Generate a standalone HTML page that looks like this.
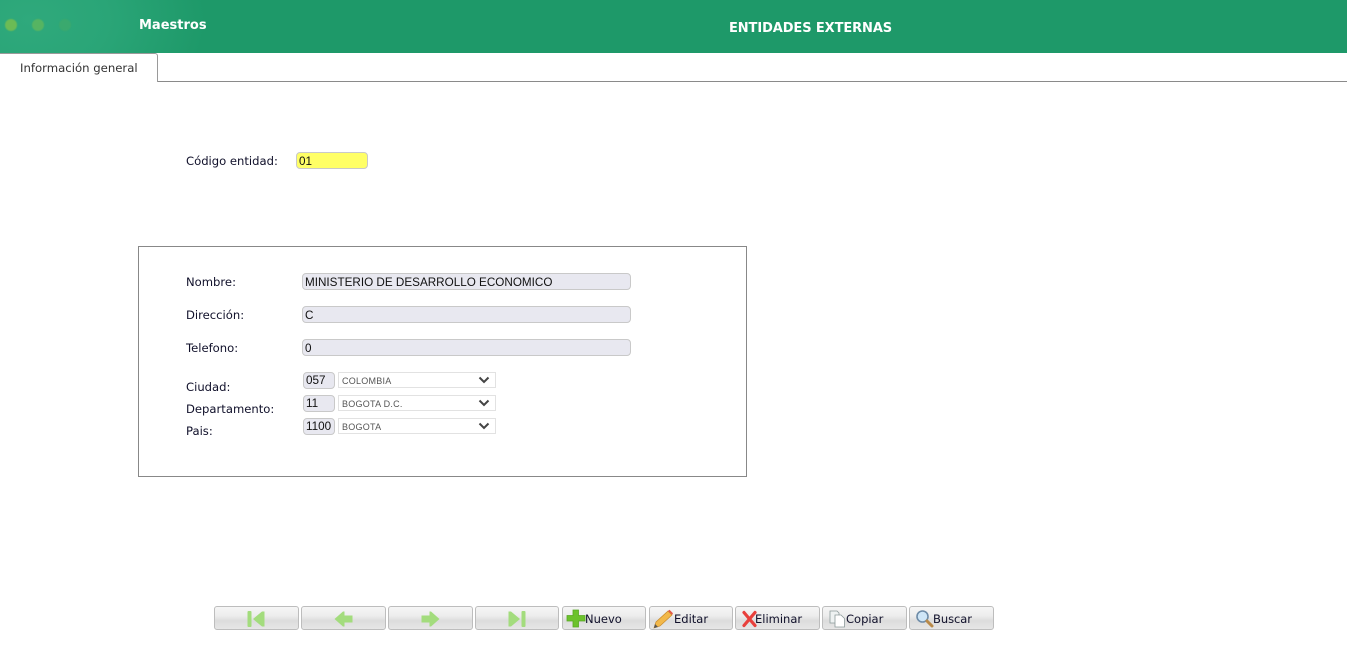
<!DOCTYPE html>
<html lang="es"><head><meta charset="utf-8"><title>Entidades externas</title>
<style>
html,body{margin:0;padding:0;background:#fff;width:1347px;height:659px;overflow:hidden;font-family:"DejaVu Sans","Liberation Sans",sans-serif;color:#1a1a2a}
.a{position:absolute;white-space:nowrap}
#hd{left:0;top:0;width:1347px;height:53px;background:radial-gradient(ellipse 175px 120px at 30px 20px,#2fa97c 0%,#2aa577 45%,#1e9969 100%)}
.dot{position:absolute;top:19px;width:12px;height:12px;border-radius:50%;filter:blur(.6px)}
.t{color:#fff;font-weight:bold;font-family:"DejaVu Sans",sans-serif;font-size:13px}
.lb{font-size:11.6px;line-height:14px;color:#10102a}
.in{position:absolute;box-sizing:border-box;background:#e8e8f0;border:1px solid #c9c9c9;border-radius:4px;height:17px;font:11.7px/15px "Liberation Sans",sans-serif;color:#111;padding-left:2px;white-space:nowrap;overflow:hidden}
.sel{position:absolute;box-sizing:border-box;left:338px;width:158px;height:16px;background:#fff;border:1px solid #e2e2e2;font:9px/16px "Liberation Sans",sans-serif;letter-spacing:.25px;color:#555;padding-left:3px}
.sel svg{position:absolute;left:139px;top:3px}
.b{position:absolute;top:606px;height:24px;box-sizing:border-box;border:1px solid #bdbdbd;border-radius:3px;background:linear-gradient(#f6f6f6 0%,#ededed 40%,#dcdcdc 62%,#e6e6e6 100%);font-size:11.5px;line-height:24px;color:#10102a;white-space:nowrap}
.b svg{position:absolute}
.b span{position:absolute;top:0}
</style></head><body>
<div class="a" id="hd">
<div class="dot" style="left:5px;background:#6cbb55"></div>
<div class="dot" style="left:32px;background:#56b462"></div>
<div class="dot" style="left:59px;background:#3aa96e"></div>
</div>
<div class="a t" style="left:139px;top:18px;letter-spacing:0">Maestros</div>
<div class="a t" style="left:729px;top:21px;letter-spacing:-.1px">ENTIDADES EXTERNAS</div>

<div class="a" style="left:0;top:81px;width:1347px;height:1px;background:#8a8a8a"></div>
<div class="a" style="left:0;top:53px;width:158px;height:29px;box-sizing:border-box;border:1px solid #9a9a9a;border-left:0;border-bottom:0;border-radius:0 3px 0 0;background:#fff"></div>
<div class="a lb" style="left:20px;top:61px;color:#333;font-size:11.7px">Información general</div>

<div class="a lb" style="left:186px;top:154px">Código entidad:</div>
<div class="in" style="left:296px;top:152px;width:72px;background:#ffff66;line-height:17px">01</div>

<div class="a" style="left:138px;top:246px;width:609px;height:231px;box-sizing:border-box;border:1px solid #888"></div>

<div class="a lb" style="left:186px;top:275px">Nombre:</div>
<div class="a lb" style="left:186px;top:308px">Dirección:</div>
<div class="a lb" style="left:186px;top:341px">Telefono:</div>
<div class="in" style="left:302px;top:273px;width:329px;line-height:17px">MINISTERIO DE DESARROLLO ECONOMICO</div>
<div class="in" style="left:302px;top:306px;width:329px;line-height:17px">C</div>
<div class="in" style="left:302px;top:339px;width:329px;line-height:17px">0</div>

<div class="a lb" style="left:186px;top:380px">Ciudad:</div>
<div class="a lb" style="left:186px;top:402px">Departamento:</div>
<div class="a lb" style="left:186px;top:424px">Pais:</div>

<div class="in" style="left:303px;top:372px;width:32px;height:17px;line-height:16px">057</div>
<div class="in" style="left:303px;top:395px;width:32px;height:17px;line-height:16px">11</div>
<div class="in" style="left:303px;top:418px;width:32px;height:17px;line-height:16px">1100</div>

<div class="sel" style="top:372px">COLOMBIA<svg width="12" height="8" viewBox="0 0 12 8"><path d="M1.5 1.5L6 6l4.500-4.500" fill="none" stroke="#444" stroke-width="2"/></svg></div>
<div class="sel" style="top:395px">BOGOTA D.C.<svg width="12" height="8" viewBox="0 0 12 8"><path d="M1.5 1.5L6 6l4.500-4.500" fill="none" stroke="#444" stroke-width="2"/></svg></div>
<div class="sel" style="top:418px">BOGOTA<svg width="12" height="8" viewBox="0 0 12 8"><path d="M1.5 1.5L6 6l4.500-4.500" fill="none" stroke="#444" stroke-width="2"/></svg></div>

<div class="b" style="left:214px;width:85px"><svg style="left:32px;top:4px" width="18" height="16" viewBox="0 0 18 16"><rect x="0.500" y="0" width="4" height="16" rx="1" fill="#a3dc7d"/><path d="M6 8L15 0.500h2.500v15H15z" fill="#a3dc7d"/></svg></div>
<div class="b" style="left:301px;width:85px"><svg style="left:32px;top:4px" width="19" height="16" viewBox="0 0 19 16"><path d="M0.500 8L9 0.500h1.500V4.500h8v7h-8v4H9z" fill="#a3dc7d"/></svg></div>
<div class="b" style="left:388px;width:85px"><svg style="left:32px;top:4px" width="19" height="16" viewBox="0 0 19 16"><path d="M18.500 8L10 0.500H8.500V4.500h-8v7h8v4H10z" fill="#a3dc7d"/></svg></div>
<div class="b" style="left:475px;width:84px"><svg style="left:32px;top:4px" width="18" height="16" viewBox="0 0 18 16"><rect x="13.500" y="0" width="4" height="16" rx="1" fill="#a3dc7d"/><path d="M12 8L3 0.500H0.500v15H3z" fill="#a3dc7d"/></svg></div>

<div class="b" style="left:562px;width:84px"><svg style="left:3px;top:2px" width="20" height="19" viewBox="0 0 20 19"><path d="M7 1h5.500v5.500H19V12h-6.500v6H7v-6H1V6.500h6z" fill="#6cc22c" stroke="#58a824" stroke-width=".8"/></svg><span style="left:22px">Nuevo</span></div>
<div class="b" style="left:649px;width:84px"><svg style="left:3px;top:2px" width="21" height="20" viewBox="0 0 21 20"><path d="M1 19l2-6L15 2l4 4L7 17z" fill="#f2b84a" stroke="#c98a2a" stroke-width=".7"/><path d="M15 2l1.500-1.300 3.500 3.500L19 6z" fill="#e25a4a"/><path d="M1 19l1-4 3 3z" fill="#555"/></svg><span style="left:24px">Editar</span></div>
<div class="b" style="left:735px;width:85px"><svg style="left:6px;top:3px" width="15" height="18" viewBox="0 0 15 18"><path d="M2 2.500l11 13M13 2.500L2 15.500" fill="none" stroke="#e8403c" stroke-width="3.200" stroke-linecap="round"/></svg><span style="left:19px">Eliminar</span></div>
<div class="b" style="left:822px;width:85px"><svg style="left:6px;top:3px" width="17" height="18" viewBox="0 0 17 18"><path d="M1 1h7l2 2v10H1z" fill="#eef2f2" stroke="#8c9a9a" stroke-width=".8"/><path d="M6 5h6l3.500 3.500V17H6z" fill="#fff" stroke="#8c9a9a" stroke-width=".8"/></svg><span style="left:23px">Copiar</span></div>
<div class="b" style="left:909px;width:85px"><svg style="left:5px;top:2px" width="19" height="19" viewBox="0 0 19 19"><circle cx="7.500" cy="7.500" r="5.500" fill="#cfe6f7" stroke="#6e8ca8" stroke-width="1.600"/><path d="M12 12l5 5" stroke="#b98a4a" stroke-width="3" stroke-linecap="round"/></svg><span style="left:23px;letter-spacing:-.05px">Buscar</span></div>
</body></html>
